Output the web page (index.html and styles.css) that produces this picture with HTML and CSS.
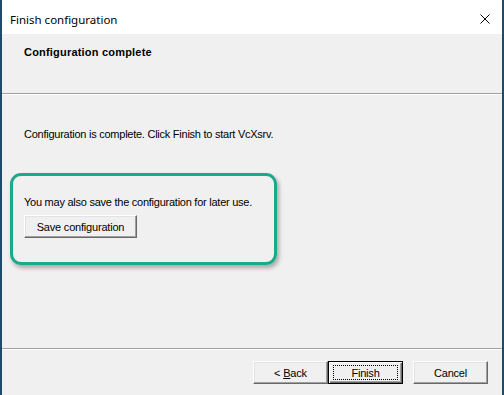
FILE: index.html
```html
<!DOCTYPE html>
<html lang="en">
<head>
    <meta charset="UTF-8">
    <title>Finish configuration</title>
    <link rel="stylesheet" href="styles.css">
</head>
<body>
    <div class="window">
        <div class="titlebar">
            <span class="title">Finish configuration</span>
            <svg class="close" width="10" height="10" viewBox="0 0 10 10">
                <path d="M0.5 0.5 L9.5 9.5 M9.5 0.5 L0.5 9.5" stroke="#000" stroke-width="1" fill="none"/>
            </svg>
        </div>

        <div class="header">
            <p class="header-title">Configuration complete</p>
        </div>
        <div class="separator"></div>

        <div class="content">
            <p class="line">Configuration is complete. Click Finish to start VcXsrv.</p>
            <!-- highlighted area -->
            <div class="highlight">
                <p class="line">You may also save the configuration for later use.</p>
                <button class="btn btn-save">Save configuration</button>
            </div>
        </div>

        <div class="separator"></div>
        <div class="footer">
            <button class="btn">&lt; <u>B</u>ack</button>
            <button class="btn btn-default">Finish</button>
            <button class="btn btn-cancel">Cancel</button>
        </div>
    </div>
</body>
</html>
```

FILE: styles.css
```css
body {
    margin: 0;
    padding: 0;
    background-color: #f0f0f0;
    font-family: 'Liberation Sans', Arial, sans-serif;
    font-size: 11px;
    color: #000;
}
.window {
    height: 395px;
    display: flex;
    flex-direction: column;
    border-left: 2px solid #1d4c6b;
    border-right: 2px solid #1d4c6b;
    box-sizing: border-box;
}
.titlebar {
    height: 34px;
    flex: none;
    box-sizing: border-box;
    background-color: #fff;
    display: flex;
    align-items: center;
    justify-content: space-between;
    padding: 4px 12px 0 8px;
}
.title {
    font-family: 'Noto Sans', sans-serif;
    font-size: 11.5px;
}
.close {
    display: block;
}
.header {
    height: 59px;
    flex: none;
    box-sizing: border-box;
    padding: 12px 22px 0;
}
.header-title {
    margin: 0;
    font-weight: bold;
    line-height: 13px;
    letter-spacing: 0.2px;
}
.separator {
    flex: none;
    height: 1px;
    background-color: #a0a0a0;
    border-bottom: 1px solid #fff;
}
.content {
    flex: 1;
    padding: 33px 0 0 22px;
}
.line {
    margin: 0;
    line-height: 13px;
    white-space: nowrap;
    letter-spacing: -0.25px;
}
/* green box drawn round the save option */
.highlight {
    margin: 32px 0 0 -14px;
    width: 267px;
    box-sizing: border-box;
    border: 3px solid #1aa98a;
    border-radius: 11px;
    padding: 20px 11px 24px;
    box-shadow: 2px 3px 4px rgba(0, 0, 0, 0.3);
}
.btn {
    font-family: 'Liberation Sans', Arial, sans-serif;
    font-size: 11px;
    letter-spacing: -0.2px;
    color: #000;
    background-color: #f0f0f0;
    width: 75px;
    height: 23px;
    padding: 0;
    border: 1px solid;
    border-color: #fff #696969 #696969 #fff;
    box-shadow: inset -1px -1px 0 #a0a0a0, inset 1px 1px 0 #e3e3e3;
    position: relative;
}
.btn-save {
    display: block;
    margin-top: 6px;
    width: 113px;
}
.btn-default {
    border: 1px solid #000;
    box-shadow: inset 1px 1px 0 #fff, inset -1px -1px 0 #696969, inset -2px -2px 0 #a0a0a0;
}
.btn-default::after {
    content: "";
    position: absolute;
    top: 3px;
    left: 4px;
    right: 4px;
    bottom: 3px;
    border: 1px dotted #000;
}
.footer {
    height: 45px;
    flex: none;
    box-sizing: border-box;
    display: flex;
    justify-content: flex-end;
    align-items: flex-start;
    padding: 11px 14px 0 0;
}
.btn-cancel {
    margin-left: 10px;
}
```
